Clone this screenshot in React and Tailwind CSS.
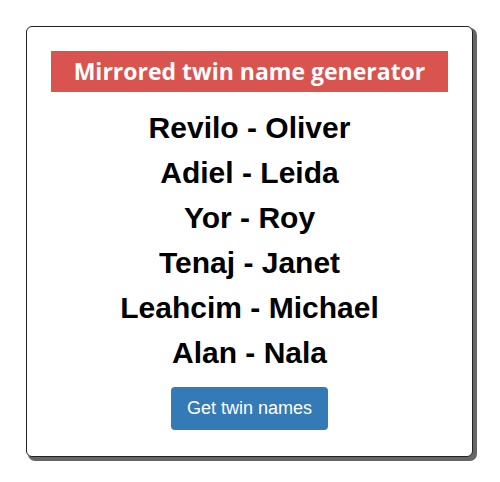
import React from "react";

const twins = [
  ["Revilo", "Oliver"],
  ["Adiel", "Leida"],
  ["Yor", "Roy"],
  ["Tenaj", "Janet"],
  ["Leahcim", "Michael"],
  ["Alan", "Nala"],
];

const App = () => {
  return (
    <div className="min-h-screen bg-white p-[26px]">
      <div className="w-[447px] h-[431px] rounded-md border border-[#222] bg-white shadow-[3px_3px_0_1px_#666] px-[24px] pt-[24px] flex flex-col items-center">
        <div className="w-full h-[41px] bg-[#d9534f] flex items-center justify-center">
          <h1 className="text-white font-bold text-[23px] font-['Open_Sans',sans-serif]">
            Mirrored twin name generator
          </h1>
        </div>
        <ul className="mt-[13px] w-full text-center font-['Liberation_Sans',Arial,sans-serif]">
          {twins.map(([a, b]) => (
            <li key={a} className="text-[30px] leading-[45px] font-bold text-black">
              {a} - {b}
            </li>
          ))}
        </ul>
        <button className="mt-[12px] w-[157px] h-[43px] rounded bg-[#337ab7] text-white text-[18px] font-['Liberation_Sans',Arial,sans-serif]">
          Get twin names
        </button>
      </div>
    </div>
  );
};

export default App;
